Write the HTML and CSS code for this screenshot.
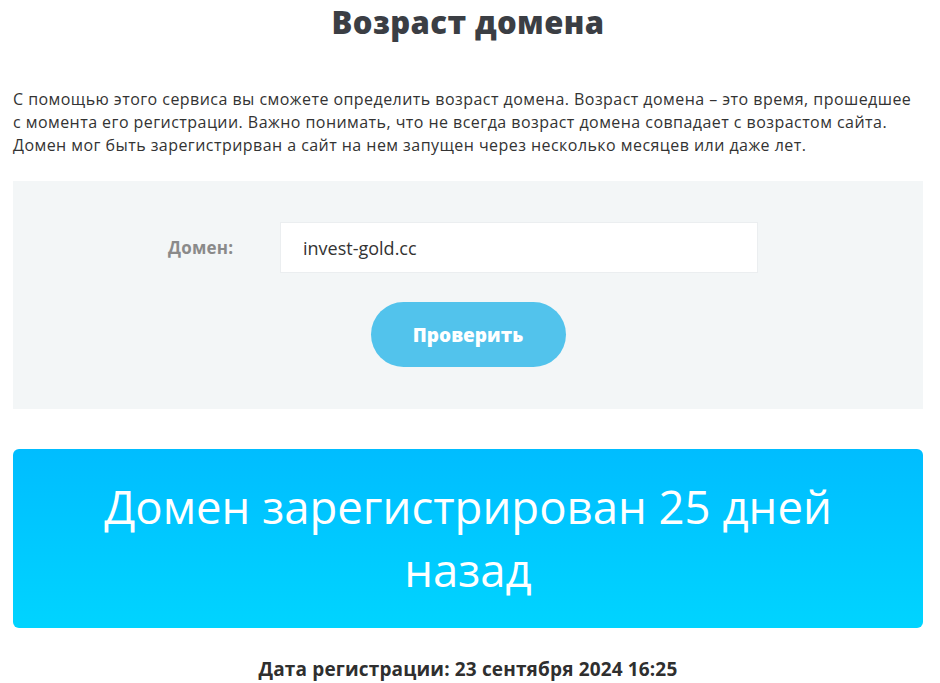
FILE: index.html
```html
<!DOCTYPE html>
<html lang="ru">
<head>
<meta charset="utf-8">
<title>Возраст домена</title>
<link rel="stylesheet" href="styles.css">
</head>
<body>
<div class="page">
  <h1 class="title">Возраст домена</h1>
  <p class="intro">С помощью этого сервиса вы сможете определить возраст домена. Возраст домена – это время, прошедшее с момента его регистрации. Важно понимать, что не всегда возраст домена совпадает с возрастом сайта. Домен мог быть зарегистрирван а сайт на нем запущен через несколько месяцев или даже лет.</p>
  <form class="check-form">
    <div class="form-row">
      <label class="form-label" for="domain">Домен:</label>
      <input class="form-input" id="domain" type="text" value="invest-gold.cc">
    </div>
    <button class="btn" type="button">Проверить</button>
  </form>
  <div class="result">Домен зарегистрирован 25 дней назад</div>
  <div class="reg-date">Дата регистрации: 23 сентября 2024 16:25</div>
</div>
</body>
</html>
```
FILE: styles.css
```css
* { box-sizing: border-box; }
html, body { margin: 0; padding: 0; background: #fff; }
body { font-family: "Open Sans", "Noto Sans", sans-serif; color: #333; }
.page { width: 910px; margin-left: 13px; }
.title {
  margin: 0;
  height: 45px;
  line-height: 45px;
  text-align: center;
  font-size: 31px;
  font-weight: 800;
  letter-spacing: 0.4px;
  color: #3b3e44;
}
.intro {
  margin: 43px 0 0;
  font-size: 16px;
  letter-spacing: 0.45px;
  line-height: 23px;
  color: #333;
}
.check-form {
  margin-top: 24px;
  background: #f3f6f7;
  padding: 41px 0 42px;
  display: flex;
  flex-direction: column;
  align-items: center;
}
.form-row {
  display: flex;
  align-items: center;
  margin-left: -10px;
}
.form-label {
  width: 112px;
  font-size: 17px;
  font-weight: 700;
  letter-spacing: 0.2px;
  color: #8a8a8a;
}
.form-input {
  width: 478px;
  height: 51px;
  border: 1px solid #ebeef0;
  background: #fff;
  padding: 0 22px;
  font-family: "Open Sans", sans-serif;
  font-size: 18px;
  color: #333;
  outline: none;
}
.btn {
  margin-top: 29px;
  width: 195px;
  height: 65px;
  border: none;
  border-radius: 33px;
  background: #52c3ec;
  color: #fff;
  font-family: "Open Sans", sans-serif;
  font-size: 19px;
  font-weight: 800;
  cursor: pointer;
}
.result {
  margin-top: 40px;
  height: 179px;
  border-radius: 6px;
  background: linear-gradient(to bottom, #00bdff, #00d4ff);
  color: #fff;
  text-align: center;
  font-size: 45.5px;
  line-height: 63px;
  padding: 26px 60px 0;
}
.reg-date {
  margin-top: 28px;
  text-align: center;
  font-size: 19px;
  font-weight: 700;
  letter-spacing: 0.15px;
  color: #2f2f2f;
}
```
